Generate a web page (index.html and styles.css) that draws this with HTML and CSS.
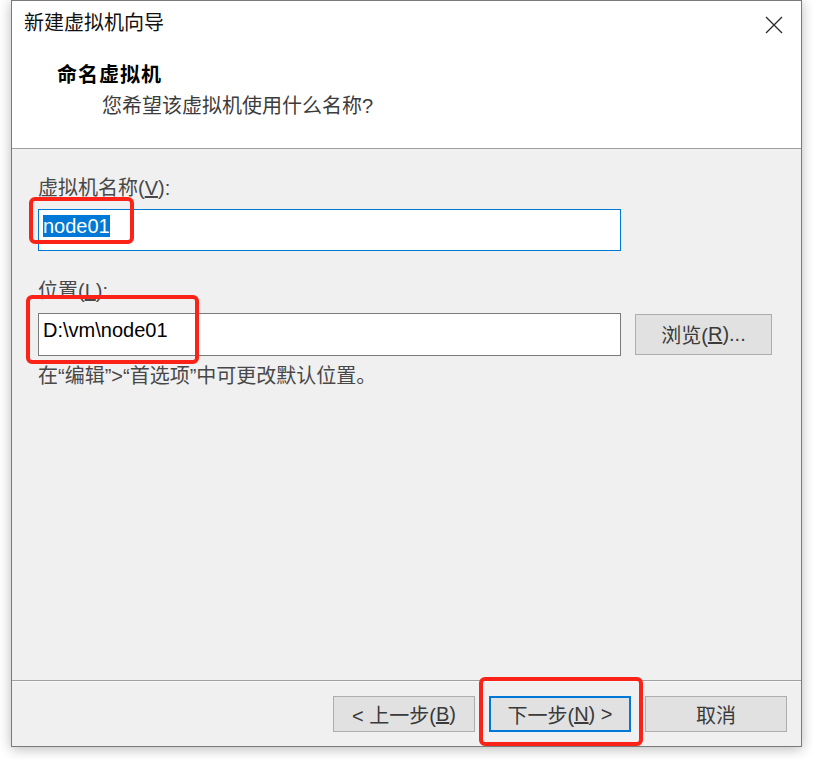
FILE: index.html
```html
<!DOCTYPE html>
<html lang="zh-CN">
<head>
<meta charset="utf-8">
<title>新建虚拟机向导</title>
<link rel="stylesheet" href="styles.css">
</head>
<body>
<div class="stage">
  <div class="window">
    <div class="titlebar">
      <span class="title">新建虚拟机向导</span>
      <svg class="close" width="18" height="18" viewBox="0 0 18 18" aria-hidden="true">
        <path d="M1 1 L17 17 M17 1 L1 17" stroke="#2b2b2b" stroke-width="1.3" fill="none"/>
      </svg>
    </div>
    <div class="header">
      <div class="heading">命名虚拟机</div>
      <div class="subtitle">您希望该虚拟机使用什么名称?</div>
    </div>
    <div class="content">
      <div class="label first">虚拟机名称(<u>V</u>):</div>
      <div class="field focused"><span class="sel">node01</span></div>
      <div class="label second">位置(<u>L</u>):</div>
      <div class="row">
        <div class="field">D:\vm\node01</div>
        <div class="btn browse">浏览(<u>R</u>)...</div>
      </div>
      <div class="hint">在“编辑”&gt;“首选项”中可更改默认位置。</div>
    </div>
    <div class="footer">
      <div class="btn fbtn">&lt; 上一步(<u>B</u>)</div>
      <div class="btn fbtn default">下一步(<u>N</u>) &gt;</div>
      <div class="btn fbtn">取消</div>
    </div>
  </div>
  <div class="mark mark-name"></div>
  <div class="mark mark-loc"></div>
  <div class="mark mark-next"></div>
</div>
</body>
</html>
```

FILE: styles.css
```css
html, body {
  margin: 0;
  padding: 0;
  background: #ffffff;
}
body {
  font-family: "Liberation Sans", "Noto Sans CJK SC", sans-serif;
  font-size: 20px;
  color: #333333;
}
.stage {
  position: relative;
  width: 813px;
  height: 759px;
  overflow: hidden;
}
.window {
  margin-left: 11px;
  width: 791px;
  height: 747px;
  box-sizing: border-box;
  border: 1px solid #7a7a7a;
  background: #f0f0f0;
  box-shadow: 0 2px 12px rgba(0, 0, 0, 0.28);
  display: flex;
  flex-direction: column;
}
.titlebar {
  height: 47px;
  box-sizing: border-box;
  padding: 8px 18px 0 12px;
  background: #ffffff;
  display: flex;
  justify-content: space-between;
  align-items: flex-start;
}
.title {
  line-height: 28px;
  color: #111111;
}
.close {
  margin-top: 7px;
  display: block;
}
.header {
  height: 101px;
  box-sizing: border-box;
  background: #ffffff;
  border-bottom: 1px solid #a0a0a0;
  padding: 13px 0 0 45px;
}
.heading {
  line-height: 28px;
  font-weight: 700;
  color: #000000;
  letter-spacing: 1px;
}
.subtitle {
  margin-top: 3px;
  padding-left: 45px;
  line-height: 28px;
  color: #3c3c3c;
}
.content {
  flex: 1;
  padding: 25px 0 0 26px;
}
.label {
  line-height: 28px;
  color: #484848;
}
.label.second {
  margin-top: 26px;
}
.field {
  width: 583px;
  height: 42px;
  box-sizing: border-box;
  margin-top: 7px;
  border: 1px solid #7a7a7a;
  background: #ffffff;
  padding: 5px 0 0 4px;
  color: #000000;
  white-space: nowrap;
}
.field.focused {
  border-color: #0078d7;
}
.sel {
  background: #0078d7;
  color: #ffffff;
}
.row {
  display: flex;
  align-items: flex-start;
  gap: 14px;
  margin-top: 8px;
}
.row .field {
  margin-top: 0;
  height: 43px;
}
.btn {
  box-sizing: border-box;
  border: 1px solid #adadad;
  background: #e1e1e1;
  color: #3a3a3a;
  display: flex;
  align-items: center;
  justify-content: center;
  white-space: nowrap;
}
.browse {
  width: 137px;
  height: 41px;
  margin-top: 1px;
}
.hint {
  margin-top: 6px;
  line-height: 28px;
  color: #484848;
}
.footer {
  height: 66px;
  box-sizing: border-box;
  border-top: 1px solid #a0a0a0;
  box-shadow: inset 0 1px 0 #f8f8f8;
  padding: 15px 14px 0 0;
  display: flex;
  justify-content: flex-end;
  align-items: flex-start;
  gap: 14px;
}
.fbtn {
  width: 142px;
  height: 36px;
}
.fbtn.default {
  border: 2px solid #0078d7;
}
.mark {
  position: absolute;
  box-sizing: border-box;
  border: 4px solid #fb2318;
  border-radius: 6px;
}
.mark-name {
  left: 29px;
  top: 197px;
  width: 105px;
  height: 47px;
}
.mark-loc {
  left: 26px;
  top: 295px;
  width: 173px;
  height: 69px;
}
.mark-next {
  left: 479px;
  top: 677px;
  width: 164px;
  height: 69px;
}
```
